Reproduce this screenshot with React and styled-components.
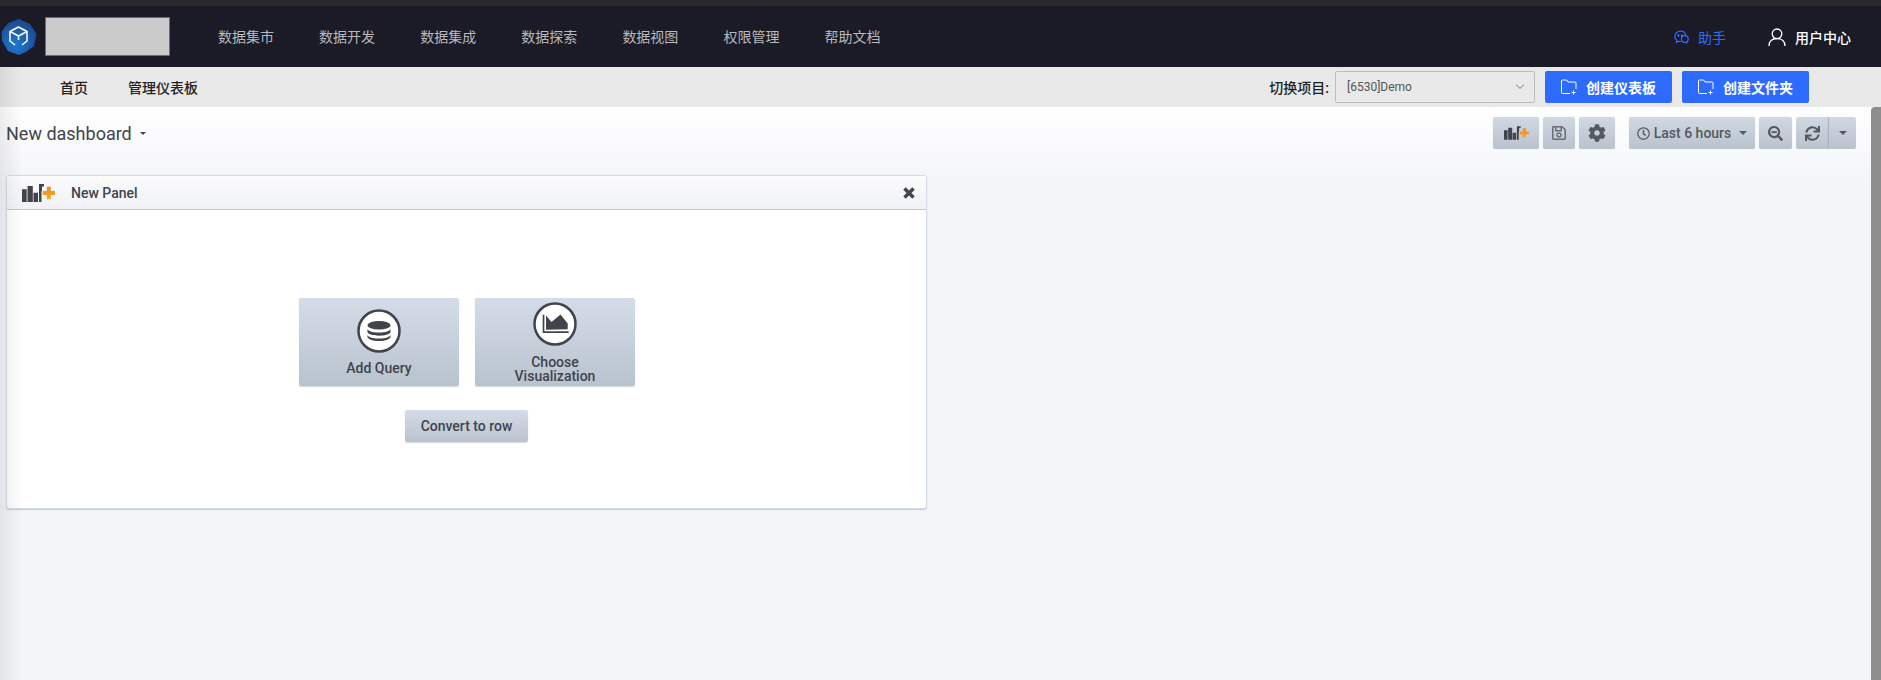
import React from "react";
import styled, { createGlobalStyle } from "styled-components";
import { FaCog, FaRegClock, FaRegSave, FaSearchMinus, FaSync } from "react-icons/fa";

const Global = createGlobalStyle`
  html, body { margin: 0; padding: 0; height: 100%; overflow: hidden; }
  body { background: #f4f5f9; font-family: Roboto, "Noto Sans CJK SC", sans-serif; }
  * { box-sizing: border-box; }
`;
const Page = styled.div`position: relative; width: 1881px; height: 680px; overflow: hidden; display: flex; flex-direction: column;`;
const TopStrip = styled.div`height: 6px; background: #2a2a2d; flex: none;`;
const Header = styled.header`height: 61px; flex: none; background: #1a1b27; display: flex; align-items: center; padding-left: 1px;`;
const LogoBox = styled.div`width: 125px; height: 39px; margin-left: 8px; background: #cbcbcb; border: 1px solid #6b6b70;`;
const Nav = styled.nav`display: flex; gap: 45.1px; margin-left: 48px;`;
const NavItem = styled.a`font-size: 14px; color: #b9b9bd; line-height: 20px; white-space: nowrap;`;
const HeaderRight = styled.div`margin-left: auto; display: flex; align-items: center; padding-right: 30px;`;
const Assist = styled.span`display: flex; align-items: center; gap: 9px; color: #2f6bff; font-size: 14px; margin-right: 42px;`;
const UserLink = styled.span`display: flex; align-items: center; gap: 9px; color: #fff; font-size: 14px; font-weight: 500;`;
const SubNav = styled.div`height: 40px; flex: none; background: #e9e9e9; display: flex; align-items: center; padding-left: 60px;`;
const SubItem = styled.a`font-size: 14px; font-weight: 500; color: #222; margin-right: 40px; white-space: nowrap;`;
const SubRight = styled.div`margin-left: auto; display: flex; align-items: center; gap: 10px; padding-right: 72px;`;
const Label = styled.span`font-size: 14px; font-weight: 500; color: #222; margin-right: -4px; white-space: nowrap;`;
const SelectBox = styled.div`width: 200px; height: 32px; border: 1px solid #bdbdbd; border-radius: 2px; background: #e9e9e9; display: flex; align-items: center; justify-content: space-between; padding: 0 9px 0 11px; font-size: 12px; color: #555;`;
const CreateBtn = styled.button`width: 127px; height: 32px; border: 0; border-radius: 2px; background: #2d6bff; color: #fff; font: 700 14px Roboto, "Noto Sans CJK SC", sans-serif; display: flex; align-items: center; justify-content: center; gap: 9px; padding: 0;`;
const Content = styled.main`flex: 1; min-height: 0; background: linear-gradient(180deg, #fff 0, #f4f5f9 75px); padding: 10px 25px 0 6px;`;
const Toolbar = styled.div`display: flex; align-items: center; height: 32px;`;
const Title = styled.h1`margin: 0; font-size: 18px; font-weight: 400; color: #41444d; line-height: 33px; display: flex; align-items: center; gap: 8px;`;
const Caret = styled.i`display: block; width: 0; height: 0; margin-left: ${p => p.$ml || 0}px; border-left: ${p => p.$s || 4.5}px solid transparent; border-right: ${p => p.$s || 4.5}px solid transparent; border-top: ${p => p.$s || 4.5}px solid ${p => p.$c || "#41444d"};`;
const Tools = styled.div`margin-left: auto; display: flex; gap: 4px; align-items: stretch; height: 32px;`;
const ToolGap = styled.span`width: 6px;`;
const ToolBtn = styled.button`width: ${p => p.$w}px; height: 32px; border: 0; padding: 0; border-radius: 2px; background: linear-gradient(180deg, #d0d8e3, #bac3cd); box-shadow: 0 0 1px rgba(90,100,120,.3); display: flex; align-items: center; justify-content: center; gap: ${p => p.$gap || 0}px; color: #55585f; font: 500 14px Roboto, sans-serif;`;
const Joined = styled.div`display: flex; height: 32px; border-radius: 2px; overflow: hidden;`;
const JoinedBtn = styled(ToolBtn)`border-radius: 0; & + & { border-left: 1px solid #aab3bf; }`;
const Panel = styled.section`width: 921px; height: 334px; margin-top: 26px; border: 1px solid #d4dbe8; border-radius: 3px; background: #fff; display: flex; flex-direction: column; box-shadow: 0 1px 1px rgba(120,130,160,.35);`;
const PanelHeader = styled.div`height: 34px; flex: none; background: linear-gradient(180deg, #fbfbfd, #f0f2f6); border-bottom: 1px solid #c3cbd8; display: flex; align-items: center; padding: 0 11px 0 15px;`;
const PanelTitle = styled.span`font-size: 14px; font-weight: 500; color: #41444d; margin-left: 16px;`;
const CloseBtn = styled.span`margin-left: auto; display: flex;`;
const PanelBody = styled.div`flex: 1; display: flex; flex-direction: column; align-items: center; padding-top: 88px; gap: 24px;`;
const ActionRow = styled.div`display: flex; gap: 16px; margin-left: 1px;`;
const ActionCard = styled.button`width: 160px; height: 88px; border: 0; padding: ${p => p.$top}px 0 0; border-radius: 2px; background: linear-gradient(180deg, #d4dce7, #b9c3ce); box-shadow: 0 1px 1px rgba(120,130,150,.3); display: flex; flex-direction: column; align-items: center; color: #41444d; font: 500 14px/14px Roboto, sans-serif;`;
const CardLabel = styled.span`margin-top: ${p => p.$m}px;`;
const ConvertBtn = styled.button`width: 123px; height: 32px; border: 0; border-radius: 2px; padding: 0; background: linear-gradient(180deg, #d4dce7, #bac3ce); box-shadow: 0 1px 1px rgba(120,130,150,.3); color: #41444d; font: 500 14px Roboto, sans-serif;`;
const EdgeShade = styled.div`position: absolute; left: 0; top: 67px; bottom: 0; width: 22px; pointer-events: none; background: linear-gradient(90deg, rgba(0,0,0,.07), rgba(0,0,0,0));`;
const Scrollbar = styled.div`position: absolute; right: 0; top: 107px; bottom: 0; width: 10px; border-radius: 4px 0 0 0; background: #8e8e8e;`;

const Hex = () => (
  <svg width="36" height="36" viewBox="0 0 36 36">
    <defs><radialGradient id="h" cx="0.4" cy="0.7" r="0.8"><stop offset="0" stopColor="#1f7ad0"/><stop offset="1" stopColor="#1c3f85"/></radialGradient></defs>
    <path d="M18 0 L29 5 L35.500 15 L33 27 L25 33 L18 36 L7 32 L1 22 L0.500 13 L7 4 Z" fill="url(#h)"/>
    <path d="M17.500 8 L26 12.500 L17.500 17 L9 12.500 Z M9 12.500 V22 L14 26 M26 12.500 V22 L21 26 M17.500 17 V21" fill="none" stroke="#fff" strokeWidth="1.500" strokeLinejoin="round"/>
  </svg>
);
const Wechat = () => (
  <svg width="15" height="14" viewBox="0 0 15 14" fill="none" stroke="#2f6bff" strokeWidth="1.200">
    <path d="M7 11.500a5.800 5.800 0 0 1-2.200-.3L2.500 12.500l.3-2.300C1.500 9.200.8 7.900.8 6.500.8 3.600 3.500 1.200 6.500 1.200c2.600 0 4.800 1.600 5.300 3.800"/>
    <circle cx="10.800" cy="9" r="3.400"/>
    <path d="M12.500 12l.5 1.500"/>
    <circle cx="4.500" cy="5.500" r=".6" fill="#2f6bff"/>
    <circle cx="8" cy="5.500" r=".6" fill="#2f6bff"/>
  </svg>
);
const User = () => (
  <svg width="18" height="18" viewBox="0 0 18 18" fill="none" stroke="#fff" strokeWidth="1.300"><circle cx="9" cy="5.800" r="4.800"/><path d="M1 18c0-4.500 3-7.500 8-7.500s8 3 8 7.500"/></svg>
);
const Chevron = () => (
  <svg width="10" height="6" viewBox="0 0 10 6" fill="none" stroke="#777" strokeWidth="1"><path d="M1 .5l4 4 4-4"/></svg>
);
const FolderPlus = () => (
  <svg width="16" height="16" viewBox="0 0 16 16" fill="none" stroke="#fff" strokeWidth="1"><path d="M9 14.500H1.500a1 1 0 0 1-1-1V2a1 1 0 0 1 1-1h4l1.500 2h7a1 1 0 0 1 1 1v6"/><path d="M12.500 11.500v4M10.500 13.500h4"/></svg>
);
const BarsPlus = ({ w = 33, h = 18 }) => (
  <svg width={w} height={h} viewBox="0 0 33 18">
    <defs><linearGradient id="o" x1="0" y1="0" x2="0" y2="1"><stop offset="0" stopColor="#ef8b2b"/><stop offset="1" stopColor="#f7ab1e"/></linearGradient></defs>
    <path d="M0 5.300h4.700V18H0zM5.500 2h5.300v16H5.500zM11.500 8.700H16V18h-4.500zM17 0H22V2.500H20V7h-.5v11H17z" fill="#41444d"/>
    <path d="M24.800 2.700h4V7H33v4h-4.200v4.300h-4V11h-4.100V7h4.100z" fill="url(#o)"/>
  </svg>
);
const Times = () => (
  <svg width="12" height="12" viewBox="0 0 12 12" stroke="#41444d" strokeWidth="3.400"><path d="M1.500 1.500l9 9M10.500 1.500l-9 9"/></svg>
);
const Db = () => (
  <svg width="44" height="44" viewBox="0 0 44 44">
    <circle cx="22" cy="22" r="20.500" fill="#fff" stroke="#41444d" strokeWidth="2.500"/>
    <ellipse cx="22" cy="16.300" rx="11.600" ry="4.300" fill="#41444d"/>
    <path d="M10.400 19.500c0 2.500 5 4 11.600 4s11.600-1.500 11.600-4v3c0 2.500-5 4.200-11.600 4.200s-11.600-1.700-11.600-4.200z" fill="#41444d"/>
    <path d="M10.400 25.500c0 2.500 5 4 11.600 4s11.600-1.500 11.600-4v2c0 2.700-5 4.500-11.600 4.500s-11.600-1.800-11.600-4.500z" fill="#41444d"/>
  </svg>
);
const AreaChart = () => (
  <svg width="44" height="44" viewBox="0 0 44 44">
    <circle cx="22" cy="22" r="20.500" fill="#fff" stroke="#41444d" strokeWidth="2.500"/>
    <path d="M10.500 12.700V30.200H35.700" fill="none" stroke="#41444d" strokeWidth="1.700"/>
    <path d="M13 27.800V13.500l5.500 6.500 9-7.500 7.200 9v5.800z" fill="#41444d"/>
  </svg>
);

const navItems = ["数据集市", "数据开发", "数据集成", "数据探索", "数据视图", "权限管理", "帮助文档"];

export default function App() {
  return (
    <Page>
      <Global />
      <TopStrip />
      <Header>
        <Hex />
        <LogoBox />
        <Nav>{navItems.map(n => <NavItem key={n}>{n}</NavItem>)}</Nav>
        <HeaderRight>
          <Assist><Wechat />助手</Assist>
          <UserLink><User />用户中心</UserLink>
        </HeaderRight>
      </Header>
      <SubNav>
        <SubItem>首页</SubItem>
        <SubItem>管理仪表板</SubItem>
        <SubRight>
          <Label>切换项目:</Label>
          <SelectBox>[6530]Demo<Chevron /></SelectBox>
          <CreateBtn><FolderPlus />创建仪表板</CreateBtn>
          <CreateBtn><FolderPlus />创建文件夹</CreateBtn>
        </SubRight>
      </SubNav>
      <Content>
        <Toolbar>
          <Title>New dashboard <Caret $s={3} /></Title>
          <Tools>
            <ToolBtn $w={46}><BarsPlus w={25} h={14} /></ToolBtn>
            <ToolBtn $w={32}><FaRegSave size={16} color="#6a6d75" /></ToolBtn>
            <ToolBtn $w={36}><FaCog size={18} /></ToolBtn>
            <ToolGap />
            <ToolBtn $w={126} $gap={4}><FaRegClock size={13} />Last 6 hours<Caret $c="#55585f" $ml={4} /></ToolBtn>
            <ToolBtn $w={33}><FaSearchMinus size={15} /></ToolBtn>
            <Joined>
              <JoinedBtn $w={32}><FaSync size={15} /></JoinedBtn>
              <JoinedBtn $w={28}><Caret $c="#55585f" /></JoinedBtn>
            </Joined>
          </Tools>
        </Toolbar>
        <Panel>
          <PanelHeader>
            <BarsPlus />
            <PanelTitle>New Panel</PanelTitle>
            <CloseBtn><Times /></CloseBtn>
          </PanelHeader>
          <PanelBody>
            <ActionRow>
              <ActionCard $top={11}><Db /><CardLabel $m={8}>Add Query</CardLabel></ActionCard>
              <ActionCard $top={4}><AreaChart /><CardLabel $m={9}>Choose<br />Visualization</CardLabel></ActionCard>
            </ActionRow>
            <ConvertBtn>Convert to row</ConvertBtn>
          </PanelBody>
        </Panel>
      </Content>
      <EdgeShade />
      <Scrollbar />
    </Page>
  );
}
